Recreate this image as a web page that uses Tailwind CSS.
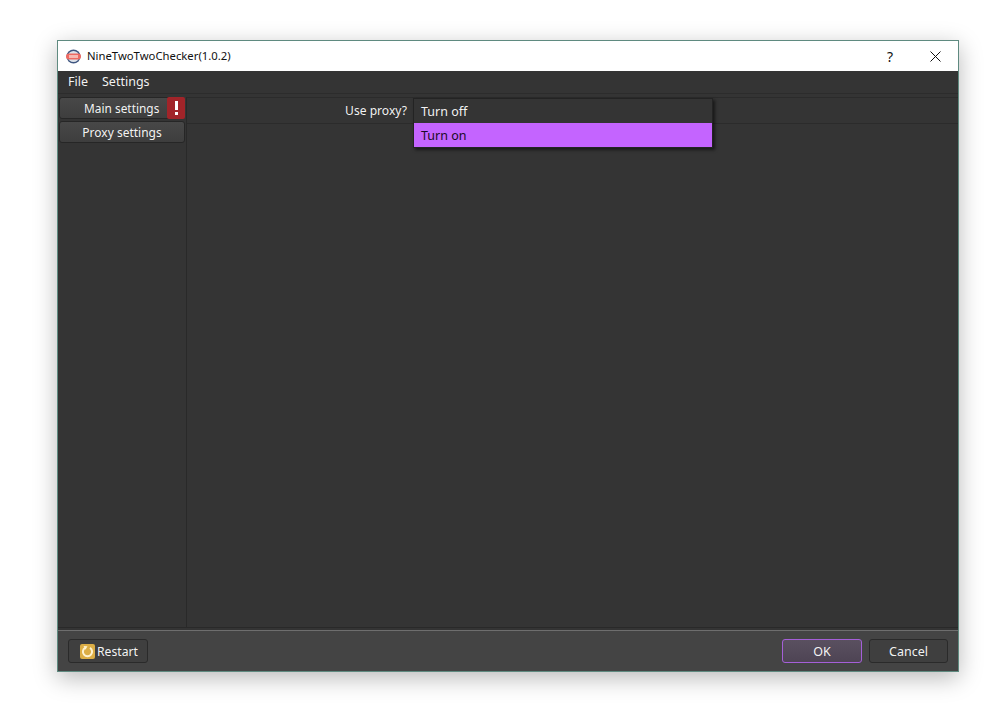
<!DOCTYPE html>
<html lang="en">
<head>
  <meta charset="UTF-8" />
  <title>NineTwoTwoChecker(1.0.2)</title>
  <script src="https://cdn.jsdelivr.net/npm/@tailwindcss/browser@4"></script>
</head>
<body class="bg-white h-[713px] overflow-hidden pt-[40px] pl-[57px] font-['Noto_Sans','Open_Sans',sans-serif] text-[12.5px]">

<!-- WINDOW -->
<div class="w-[902px] h-[632px] border border-[#5f8a80] flex flex-col bg-[#343434] shadow-[0_6px_22px_rgba(0,0,0,0.28)]">

  <!-- TITLE BAR -->
  <div class="h-[30px] shrink-0 bg-white flex items-center text-[#111] pl-[8px]">
    <svg class="w-[15px] h-[15px]" viewBox="0 0 15 15">
      <circle cx="7.5" cy="7.5" r="7" fill="#3f5680"/>
      <circle cx="7.5" cy="7.5" r="5.6" fill="#dfe3ea"/>
      <rect x="0" y="4.5" width="15" height="6" rx="3" fill="#ee6a62"/>
      <rect x="3" y="6" width="9" height="3" fill="#f8b9b2"/>
    </svg>
    <span class="ml-[6px] text-[11.3px]">NineTwoTwoChecker(1.0.2)</span>
    <span class="ml-auto text-[14px] w-[20px] text-center">?</span>
    <svg class="w-[11px] h-[11px] ml-[30px] mr-[17px]" viewBox="0 0 11 11" fill="none" stroke="#111" stroke-width="1">
      <path d="M0.5 0.5L10.5 10.5M10.5 0.5L0.5 10.5"/>
    </svg>
  </div>

  <!-- MENU -->
  <div class="h-[22px] shrink-0 flex items-center gap-[14px] pl-[10px] text-white/95">
    <span>File</span>
    <span>Settings</span>
  </div>

  <!-- BODY -->
  <div class="flex-1 flex min-h-0 pt-[3px] pb-[2px] border-t border-[#2c2c2c]">
    <!-- SIDEBAR -->
    <div class="w-[129px] shrink-0 px-px flex flex-col gap-[2px] border-r border-b border-[#292929]">
      <div class="relative h-[22px] bg-linear-to-b from-[#484848] to-[#3e3e3e] border border-[#262626] rounded-[3px] flex items-center text-white/95 pl-[24px] pt-px text-[11.9px]">
        Main settings
        <div class="absolute -right-px -top-px w-[18px] h-[22px] bg-[#a12429] rounded-[2px] flex items-center justify-center">
          <div class="flex flex-col items-center gap-[2px]">
            <div class="w-[3px] h-[9px] bg-white"></div>
            <div class="w-[3px] h-[3px] bg-white"></div>
          </div>
        </div>
      </div>
      <div class="h-[22px] bg-linear-to-b from-[#484848] to-[#3e3e3e] border border-[#262626] rounded-[3px] flex items-center justify-center text-white/95 pt-px text-[12px]">Proxy settings</div>
    </div>

    <!-- CONTENT -->
    <div class="relative flex-1 border-b border-[#292929]">
      <div class="h-[27px] border-y border-[#2b2b2b] flex items-center justify-end pr-[551px] pt-[2px] text-white/95 text-[12.1px]">Use proxy?</div>
      <!-- DROPDOWN -->
      <div class="absolute left-[226px] top-px w-[300px] border border-[#232323] bg-[#343434] shadow-[2px_2px_3px_rgba(0,0,0,0.55)]">
        <div class="h-[24px] flex items-center pl-[7px] pt-[2px] text-white/95">Turn off</div>
        <div class="h-[24px] flex items-center pl-[7px] pt-[2px] bg-[#c464ff] text-[#1a0a26]">Turn on</div>
      </div>
    </div>
  </div>

  <!-- FOOTER -->
  <div class="h-[41px] shrink-0 bg-[#444444] border-t border-[#6e6e6e] flex items-center px-[10px]">
    <button class="h-[24px] w-[80px] bg-[#3f3f3f] border border-[#2a2a2a] rounded-[3px] flex items-center pl-[11px] pt-[2px] text-white/95 text-[12.2px]">
      <svg class="w-[15px] h-[15px] mr-[2px] -mt-[2px]" viewBox="0 0 15 15">
        <rect width="15" height="15" rx="2" fill="#dcae46"/>
        <path d="M5 3.8A4.6 4.6 0 1 0 10 3.8" fill="none" stroke="#fff3d0" stroke-width="2"/>
        <path d="M3.5 2L7.5 2.2L5.5 5.8Z" fill="#fff3d0"/>
      </svg>
      Restart
    </button>
    <button class="ml-auto h-[24px] w-[80px] bg-linear-to-b from-[#5a5060] to-[#4e4454] border border-[#a55fd8] rounded-[3px] text-white/95 pt-[2px]">OK</button>
    <button class="ml-[7px] h-[24px] w-[79px] bg-[#3f3f3f] border border-[#2a2a2a] rounded-[3px] text-white/95 pt-[2px]">Cancel</button>
  </div>
</div>

</body>
</html>
